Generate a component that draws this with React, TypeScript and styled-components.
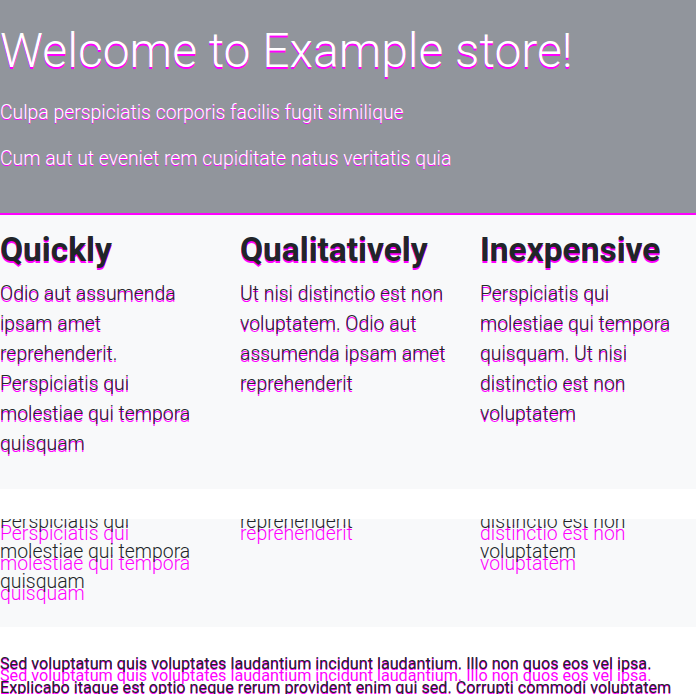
import React from "react";
import styled, { createGlobalStyle } from "styled-components";

const GlobalStyle = createGlobalStyle`
  html, body {
    margin: 0;
    padding: 0;
    background: #ffffff;
  }
  body {
    font-family: Roboto, "Noto Sans", "Liberation Sans", sans-serif;
    color: #212529;
  }
  * { box-sizing: border-box; }
`;

const Hero = styled.header`
  background: #91959c;
  padding: 22px 0 23px;
  border-bottom: 2px solid #ff00ff;
`;

const Title = styled.h1`
  margin: 0 0 18px;
  font-size: 48px;
  line-height: 57.6px;
  font-weight: 300;
  color: #ffffff;
  text-shadow: 0 2px 0 #ff00ff;
`;

const Lead = styled.p`
  margin: 0 0 16px;
  font-size: 19.4px;
  line-height: 30px;
  font-weight: 300;
  color: #ffffff;
  text-shadow: 0 1px 0 #ff00ff;
`;

const Features = styled.section<{ $ghost: number }>`
  background: #f8f9fa;
  padding: 16px 0 30px;
  display: grid;
  grid-template-columns: repeat(3, 1fr);
  column-gap: 24px;
  text-shadow: 0 ${(p) => p.$ghost}px 0 #ff00ff;
  flex-shrink: 0;
`;

const FeatureTitle = styled.h2`
  margin: 0 0 10px;
  font-size: 33.5px;
  line-height: 38.4px;
  font-weight: 700;
  color: #212529;
`;

const FeatureText = styled.p`
  margin: 0;
  font-size: 19.4px;
  line-height: 30px;
  font-weight: 300;
  color: #212529;
`;

const Echo = styled.div`
  margin-top: 30px;
  height: 108px;
  overflow: hidden;
  display: flex;
  flex-direction: column;
  justify-content: flex-end;
`;

const Footer = styled.p`
  margin: 25px 0 0;
  font-size: 16.2px;
  line-height: 24px;
  font-weight: 400;
  color: #212529;
  text-shadow: 0 1px 0 #ff00ff, 0 12px 0 #ff00ff;
`;

const features = [
  {
    title: "Quickly",
    text: "Odio aut assumenda ipsam amet reprehenderit. Perspiciatis qui molestiae qui tempora quisquam",
  },
  {
    title: "Qualitatively",
    text: "Ut nisi distinctio est non voluptatem. Odio aut assumenda ipsam amet reprehenderit",
  },
  {
    title: "Inexpensive",
    text: "Perspiciatis qui molestiae qui tempora quisquam. Ut nisi distinctio est non voluptatem",
  },
];

function FeatureGrid({ ghost }: { ghost: number }) {
  return (
    <Features $ghost={ghost}>
      {features.map((f) => (
        <div key={f.title}>
          <FeatureTitle>{f.title}</FeatureTitle>
          <FeatureText>{f.text}</FeatureText>
        </div>
      ))}
    </Features>
  );
}

export default function App() {
  return (
    <>
      <GlobalStyle />
      <Hero>
        <Title>Welcome to Example store!</Title>
        <Lead>Culpa perspiciatis corporis facilis fugit similique</Lead>
        <Lead>Cum aut ut eveniet rem cupiditate natus veritatis quia</Lead>
      </Hero>
      <FeatureGrid ghost={2} />
      <Echo>
        <FeatureGrid ghost={12} />
      </Echo>
      <Footer>
        Sed voluptatum quis voluptates laudantium incidunt laudantium. Illo non quos eos vel ipsa.
        Explicabo itaque est optio neque rerum provident enim qui sed. Corrupti commodi voluptatem
        quae at deleniti.
      </Footer>
    </>
  );
}
